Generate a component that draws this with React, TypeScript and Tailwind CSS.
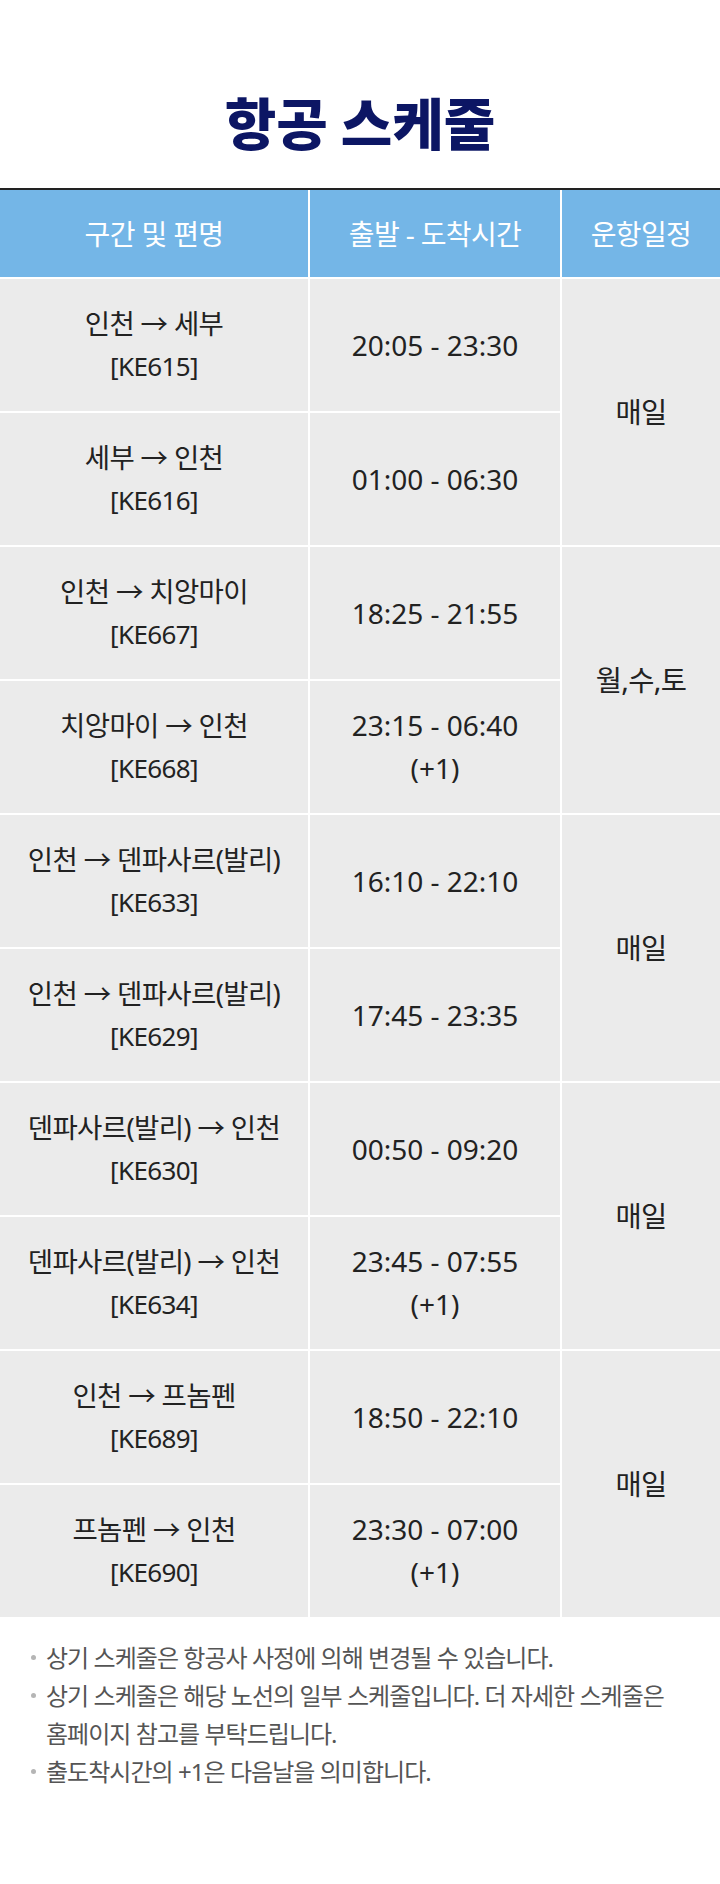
const font = { fontFamily: '"Noto Sans", "Noto Sans CJK KR", sans-serif' };

interface Flight {
  route: string;
  code: string;
  time: string;
  nextDay?: boolean;
}

interface Group {
  days: string;
  flights: [Flight, Flight];
}

const groups: Group[] = [
  {
    days: "매일",
    flights: [
      { route: "인천 → 세부", code: "[KE615]", time: "20:05 - 23:30" },
      { route: "세부 → 인천", code: "[KE616]", time: "01:00 - 06:30" },
    ],
  },
  {
    days: "월,수,토",
    flights: [
      { route: "인천 → 치앙마이", code: "[KE667]", time: "18:25 - 21:55" },
      { route: "치앙마이 → 인천", code: "[KE668]", time: "23:15 - 06:40", nextDay: true },
    ],
  },
  {
    days: "매일",
    flights: [
      { route: "인천 → 덴파사르(발리)", code: "[KE633]", time: "16:10 - 22:10" },
      { route: "인천 → 덴파사르(발리)", code: "[KE629]", time: "17:45 - 23:35" },
    ],
  },
  {
    days: "매일",
    flights: [
      { route: "덴파사르(발리) → 인천", code: "[KE630]", time: "00:50 - 09:20" },
      { route: "덴파사르(발리) → 인천", code: "[KE634]", time: "23:45 - 07:55", nextDay: true },
    ],
  },
  {
    days: "매일",
    flights: [
      { route: "인천 → 프놈펜", code: "[KE689]", time: "18:50 - 22:10" },
      { route: "프놈펜 → 인천", code: "[KE690]", time: "23:30 - 07:00", nextDay: true },
    ],
  },
];

const notes: React.ReactNode[] = [
  "상기 스케줄은 항공사 사정에 의해 변경될 수 있습니다.",
  <>
    상기 스케줄은 해당 노선의 일부 스케줄입니다. 더 자세한 스케줄은
    <br />
    홈페이지 참고를 부탁드립니다.
  </>,
  "출도착시간의 +1은 다음날을 의미합니다.",
];

export default function App() {
  return (
    <div className="min-h-[1884px] w-[720px] bg-white" style={font}>
      <h1
        className="pt-[92px] text-center text-[56px] leading-[58px] font-black text-[#0c1664]"
        style={{ fontFamily: '"Noto Sans CJK KR", sans-serif' }}
      >
        항공 스케줄
      </h1>

      <div className="mt-[38px] border-t-2 border-[#222]">
        <div className="grid grid-cols-[308px_250px_1fr] gap-[2px] bg-white tracking-[-0.04em]">
          <div className="flex h-[87px] items-center justify-center bg-[#74b6e7] text-[28px] text-white">구간 및 편명</div>
          <div className="flex h-[87px] items-center justify-center bg-[#74b6e7] text-[28px] text-white">출발 - 도착시간</div>
          <div className="flex h-[87px] items-center justify-center bg-[#74b6e7] text-[28px] text-white">운항일정</div>

          {groups.map((g, gi) => (
            <div key={gi} className="contents">
              {g.flights.map((f, fi) => (
                <div key={fi} className="contents">
                  <div
                    className="flex h-[132px] flex-col items-center justify-center bg-[#ebebeb] leading-[43px] text-[#222]"
                    style={{ gridColumn: 1, gridRow: 2 + gi * 2 + fi }}
                  >
                    <span className="text-[27.5px]">{f.route}</span>
                    <span className="text-[26px]">{f.code}</span>
                  </div>
                  <div
                    className="flex h-[132px] flex-col items-center justify-center bg-[#ebebeb] text-[28px] leading-[43px] tracking-normal text-[#222]"
                    style={{ gridColumn: 2, gridRow: 2 + gi * 2 + fi }}
                  >
                    <span>{f.time}</span>
                    {f.nextDay && <span>(+1)</span>}
                  </div>
                </div>
              ))}
              <div
                className="flex items-center justify-center bg-[#ebebeb] text-[28.5px] text-[#222]"
                style={{ gridColumn: 3, gridRow: `${2 + gi * 2} / span 2` }}
              >
                {g.days}
              </div>
            </div>
          ))}
        </div>
      </div>

      <ul className="pt-[22px] pr-4 text-[24px] leading-[38px] tracking-[-0.04em] text-[#555]">
        {notes.map((n, i) => (
          <li key={i} className="flex">
            <span className="flex w-[46px] shrink-0 justify-end pt-[16px] pr-[10px]">
              <span className="h-[5px] w-[5px] rounded-full bg-[#b5b5b5]" />
            </span>
            <span className="whitespace-nowrap">{n}</span>
          </li>
        ))}
      </ul>
    </div>
  );
}
